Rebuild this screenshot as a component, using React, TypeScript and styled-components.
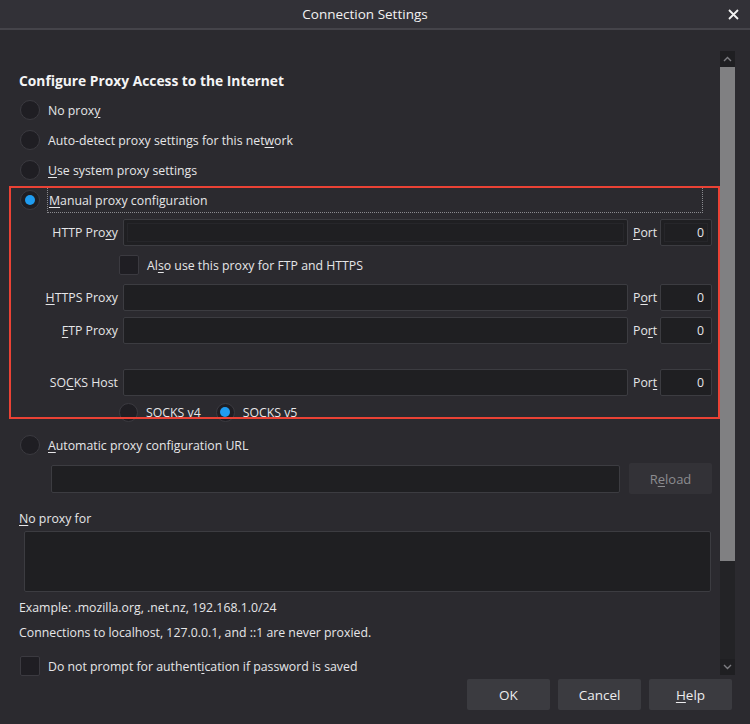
import React from "react";
import styled, { createGlobalStyle } from "styled-components";

const GlobalStyle = createGlobalStyle`
  html, body {
    margin: 0;
    padding: 0;
    background: #2b2a2f;
  }
  * {
    box-sizing: border-box;
  }
`;

type ProxyField = {
  id: string;
  label: React.ReactNode;
  port: React.ReactNode;
  gap: number;
};

const App = () => {
  const proxyFields: ProxyField[] = [
    { id: "https", label: <><U>H</U>TTPS Proxy</>, port: <>P<U>o</U>rt</>, gap: 4 },
    { id: "ftp", label: <><U>F</U>TP Proxy</>, port: <>Po<U>r</U>t</>, gap: 6 },
    { id: "socks", label: <>SO<U>C</U>KS Host</>, port: <>Por<U>t</U></>, gap: 25 },
  ];

  return (
    <Dialog>
      <GlobalStyle />
      <TitleBar>
        <Title>Connection Settings</Title>
        <CloseButton>
          <svg width="11" height="11" viewBox="0 0 11 11">
            <path d="M1 1L10 10M10 1L1 10" stroke="#f2f2f2" strokeWidth="1.8" />
          </svg>
        </CloseButton>
      </TitleBar>

      <Main>
        <Content>
          <Heading>Configure Proxy Access to the Internet</Heading>
          <OptionRow>
            <Radio />
            <Label>No prox<U>y</U></Label>
          </OptionRow>
          <OptionRow>
            <Radio />
            <Label>Auto-detect proxy settings for this net<U>w</U>ork</Label>
          </OptionRow>
          <OptionRow>
            <Radio />
            <Label><U>U</U>se system proxy settings</Label>
          </OptionRow>

          <ManualSection>
            <OptionRow>
              <Radio $checked />
              <FocusLabel><U>M</U>anual proxy configuration</FocusLabel>
            </OptionRow>

            <FieldRow $gap={4}>
              <FieldLabel>HTTP Pro<U>x</U>y</FieldLabel>
              <TextInput $inner />
              <PortLabel><U>P</U>ort</PortLabel>
              <PortInput $inner>0</PortInput>
            </FieldRow>

            <CheckRow $indent={100}>
              <CheckBox />
              <Label>Al<U>s</U>o use this proxy for FTP and HTTPS</Label>
            </CheckRow>

            {proxyFields.map((f) => (
              <FieldRow key={f.id} $gap={f.gap}>
                <FieldLabel>{f.label}</FieldLabel>
                <TextInput />
                <PortLabel>{f.port}</PortLabel>
                <PortInput>0</PortInput>
              </FieldRow>
            ))}

            <SocksRow>
              <SmallRadio />
              <SocksLabel>SOCKS v4</SocksLabel>
              <SmallRadio $checked />
              <SocksLabel>SOCKS v5</SocksLabel>
            </SocksRow>

            <Highlight />
          </ManualSection>

          <AutoRow>
            <Radio />
            <Label><U>A</U>utomatic proxy configuration URL</Label>
          </AutoRow>

          <UrlRow>
            <UrlInput />
            <ReloadButton>R<U>e</U>load</ReloadButton>
          </UrlRow>

          <SectionLabel><U>N</U>o proxy for</SectionLabel>
          <TextArea />
          <HelpText $top={5}>Example: .mozilla.org, .net.nz, 192.168.1.0/24</HelpText>
          <HelpText $top={5}>Connections to localhost, 127.0.0.1, and ::1 are never proxied.</HelpText>

          <CheckRow $indent={1} $top={14} $height={20}>
            <CheckBox />
            <Label>Do not prompt for authent<U>i</U>cation if password is saved</Label>
          </CheckRow>
        </Content>

        <ScrollBar>
          <ScrollArrow>
            <svg width="9" height="6" viewBox="0 0 9 6">
              <path d="M1 5L4.5 1.5L8 5" stroke="#7d7d82" strokeWidth="1.4" fill="none" />
            </svg>
          </ScrollArrow>
          <ScrollThumb />
          <ScrollTrack />
          <ScrollArrow>
            <svg width="9" height="6" viewBox="0 0 9 6">
              <path d="M1 1L4.5 4.5L8 1" stroke="#7d7d82" strokeWidth="1.4" fill="none" />
            </svg>
          </ScrollArrow>
        </ScrollBar>
      </Main>

      <Footer>
        <DialogButton>OK</DialogButton>
        <DialogButton>Cancel</DialogButton>
        <DialogButton><U>H</U>elp</DialogButton>
      </Footer>
    </Dialog>
  );
};

export default App;

const Dialog = styled.div`
  width: 750px;
  height: 724px;
  display: flex;
  flex-direction: column;
  background: #2b2a2f;
  color: #e6e6e8;
  font-family: "Open Sans", "Noto Sans", sans-serif;
  font-size: 12.3px;
  overflow: hidden;
`;

const TitleBar = styled.div`
  height: 30px;
  display: flex;
  align-items: center;
  background: #323137;
  border-bottom: 2px solid #45444a;
`;

const Title = styled.div`
  flex: 1;
  text-align: center;
  font-size: 13.5px;
  color: #f2f2f2;
  padding-left: 2px;
`;

const CloseButton = styled.div`
  width: 22px;
  height: 28px;
  display: flex;
  align-items: center;
  justify-content: flex-start;
`;

const Main = styled.div`
  height: 647px;
  display: flex;
`;

const Content = styled.div`
  flex: 1;
  padding: 35px 8px 0 19px;
  display: flex;
  flex-direction: column;
`;

const Heading = styled.div`
  height: 30px;
  display: flex;
  align-items: center;
  font-size: 13.8px;
  font-weight: 700;
  color: #f4f4f5;
`;

const U = styled.span`
  text-decoration: underline;
  text-underline-offset: 2px;
`;

const OptionRow = styled.div`
  height: 30px;
  display: flex;
  align-items: center;
  padding-left: 1px;
`;

const Radio = styled.span<{ $checked?: boolean }>`
  width: 20px;
  height: 20px;
  flex: none;
  border-radius: 50%;
  background: #1f1e23;
  border: 1px solid #3b3a40;
  display: flex;
  align-items: center;
  justify-content: center;
  margin-right: 8px;

  &::after {
    content: "";
    width: 10px;
    height: 10px;
    border-radius: 50%;
    background: ${(p) => (p.$checked ? "#1f9cf0" : "transparent")};
  }
`;

const SmallRadio = styled(Radio)`
  width: 19px;
  height: 19px;
`;

const Label = styled.span`
  white-space: nowrap;
`;

const FocusLabel = styled.span`
  flex: none;
  width: 656px;
  height: 26px;
  margin-left: -1px;
  padding-left: 1px;
  display: flex;
  align-items: center;
  border: 1px dotted #8a8a8f;
`;

const ManualSection = styled.div`
  position: relative;
  display: flex;
  flex-direction: column;
`;

const Highlight = styled.div`
  position: absolute;
  top: 1px;
  left: -10px;
  right: -8px;
  bottom: 4px;
  border: 2px solid #ea4235;
  pointer-events: none;
`;

const FieldRow = styled.div<{ $gap: number }>`
  height: 27px;
  margin-top: ${(p) => p.$gap}px;
  display: grid;
  grid-template-columns: 100px 1fr 32px 52px;
  align-items: center;
`;

const FieldLabel = styled.span`
  text-align: right;
  padding-right: 1px;
  white-space: nowrap;
`;

const inputBase = `
  height: 100%;
  background: #1f1f22;
  border: 1px solid #3c3c41;
  border-radius: 2px;
`;

const TextInput = styled.div<{ $inner?: boolean }>`
  ${inputBase}
  margin-left: 4px;
  box-shadow: ${(p) => (p.$inner ? "inset 0 0 0 3px #1f1f22, inset 0 0 0 4px #26262a" : "none")};
`;

const PortLabel = styled.span`
  text-align: left;
  padding-left: 5px;
`;

const PortInput = styled.div<{ $inner?: boolean }>`
  ${inputBase}
  display: flex;
  align-items: center;
  justify-content: flex-end;
  padding-right: 7px;
  box-shadow: ${(p) => (p.$inner ? "inset 0 0 0 3px #1f1f22, inset 0 0 0 4px #26262a" : "none")};
`;

const CheckRow = styled.div<{ $indent: number; $top?: number; $height?: number }>`
  height: ${(p) => p.$height ?? 30}px;
  margin-top: ${(p) => p.$top ?? 4}px;
  padding-left: ${(p) => p.$indent}px;
  display: flex;
  align-items: center;
`;

const CheckBox = styled.span`
  width: 20px;
  height: 20px;
  flex: none;
  background: #1f1e23;
  border: 1px solid #3b3a40;
  border-radius: 2px;
  margin-right: 8px;
`;

const SocksRow = styled.div`
  height: 22px;
  margin-top: 5px;
  padding-left: 100px;
  display: flex;
  align-items: center;
`;

const SocksLabel = styled.span`
  margin-right: 15px;
`;

const AutoRow = styled(OptionRow)`
  margin-top: 7px;
`;

const UrlRow = styled.div`
  height: 31px;
  margin-top: 3px;
  display: flex;
  align-items: center;
  gap: 9px;
  padding-left: 32px;
`;

const UrlInput = styled.div`
  ${inputBase}
  flex: 1;
  height: 28px;
`;

const ReloadButton = styled.div`
  width: 83px;
  height: 31px;
  display: flex;
  align-items: center;
  justify-content: center;
  background: #333237;
  border-radius: 2px;
  color: #8c8c90;
  font-size: 13px;
`;

const SectionLabel = styled.div`
  height: 20px;
  margin-top: 14px;
  display: flex;
  align-items: center;
`;

const TextArea = styled.div`
  ${inputBase}
  height: 61px;
  margin: 3px 1px 0 5px;
`;

const HelpText = styled.div<{ $top: number }>`
  height: 20px;
  margin-top: ${(p) => p.$top}px;
  display: flex;
  align-items: center;
  font-size: 12.3px;
`;

const ScrollBar = styled.div`
  width: 15px;
  margin: 21px 15px 2px 0;
  display: flex;
  flex-direction: column;
  background: #232326;
`;

const ScrollArrow = styled.div`
  height: 16px;
  flex: none;
  display: flex;
  align-items: center;
  justify-content: center;
  background: #1f1f22;
`;

const ScrollThumb = styled.div`
  height: 494px;
  flex: none;
  background: #808082;
`;

const ScrollTrack = styled.div`
  flex: 1;
`;

const Footer = styled.div`
  flex: 1;
  display: flex;
  justify-content: flex-end;
  gap: 8px;
  padding: 2px 18px 0 0;
`;

const DialogButton = styled.div`
  width: 83px;
  height: 31px;
  display: flex;
  align-items: center;
  justify-content: center;
  background: #3b3b40;
  border-radius: 2px;
  color: #ececee;
  font-size: 13.5px;
`;
